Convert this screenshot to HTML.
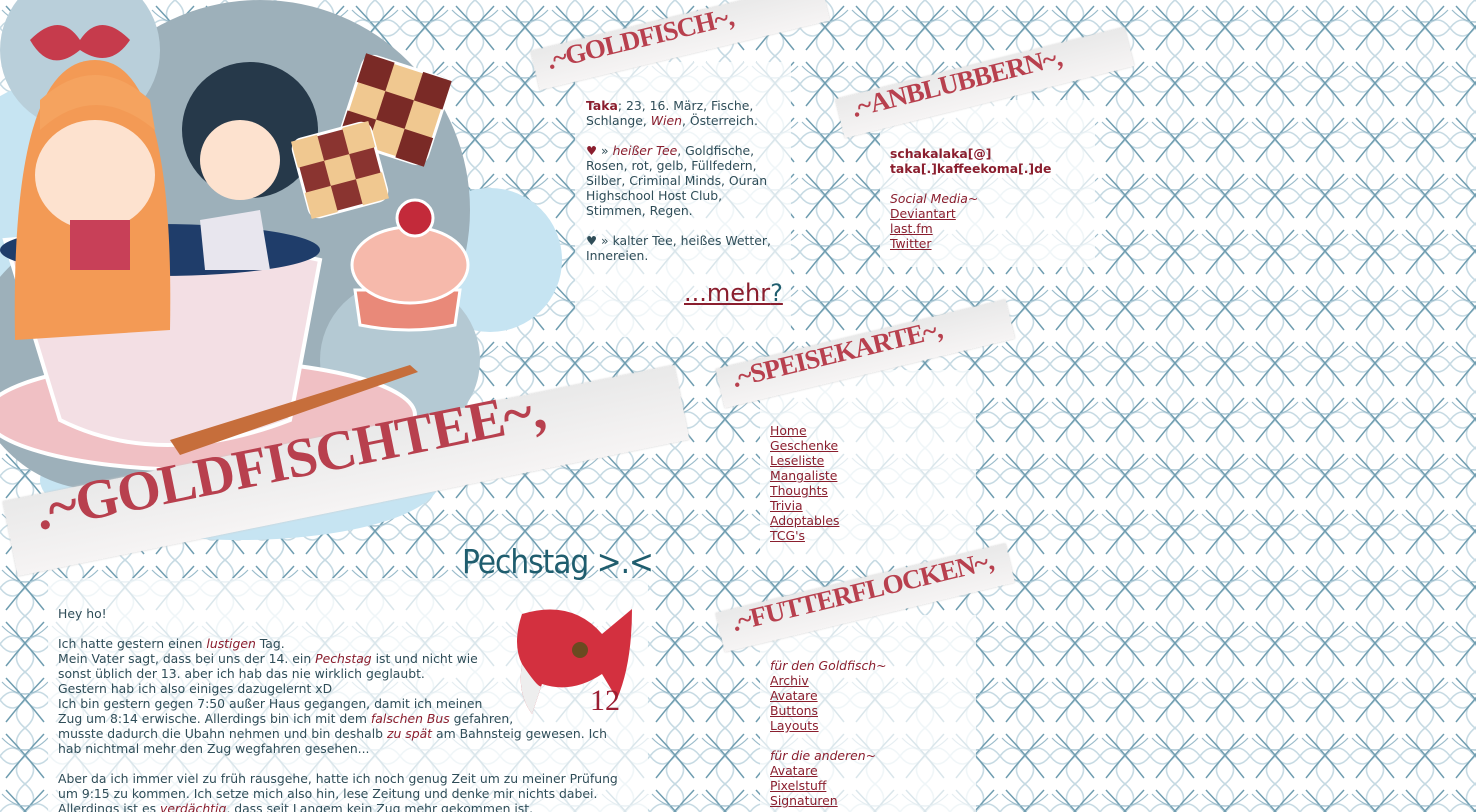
<!DOCTYPE html>
<html><head><meta charset="utf-8"><style>
html,body{margin:0;padding:0;width:1476px;height:812px;overflow:hidden}
body{position:relative;font-family:"DejaVu Sans","Liberation Sans",sans-serif;font-size:12.4px;line-height:15px;color:#2f4d58;background:#fff}
#bg{position:absolute;left:0;top:0}
.box{position:absolute;background:rgba(255,255,255,0.74)}
.t{position:absolute}
a{color:#8a1e2e;text-decoration:underline}
.r{color:#8a1e2e}
b.r{font-weight:bold}
i.r{font-style:italic}
.ban{position:absolute;height:40px;background:linear-gradient(#e9e9e9,#f6f4f4);transform-origin:left bottom;box-shadow:0 0 2px #ccc}
.ban span{position:absolute;font-family:"Liberation Serif",serif;font-weight:bold;color:#b8404e;white-space:nowrap;letter-spacing:-1px}
</style></head><body>
<svg id="bg" width="1476" height="812">
<defs><pattern id="p" width="50" height="56" patternUnits="userSpaceOnUse">
<rect width="50" height="56" fill="#fff"/>
<g fill="none" stroke="#c6dae3" stroke-width="1.6">
<path d="M25 0 Q8 14 25 28 Q42 14 25 0M25 56 Q8 42 25 28 Q42 42 25 56"/>
<path d="M0 28 Q12 12 25 28 Q38 44 50 28M0 28 Q12 44 25 28 Q38 12 50 28"/>
</g>
<g fill="none" stroke="#6f9db0" stroke-width="1.5">
<path d="M6 6 Q25 26 44 50M44 6 Q25 26 6 50"/>
<path d="M2 10 Q25 34 48 10" stroke="#9bbccb" stroke-width="1.2"/>
</g></pattern></defs>
<rect width="1476" height="812" fill="url(#p)"/>
<!-- illustration -->
<circle cx="60" cy="200" r="120" fill="#c6e4f2"/>
<circle cx="490" cy="260" r="72" fill="#c6e4f2"/>
<ellipse cx="240" cy="480" rx="200" ry="60" fill="#c6e4f2"/>
<circle cx="260" cy="210" r="210" fill="#9db0ba"/>
<circle cx="100" cy="360" r="130" fill="#9db0ba"/>
<circle cx="400" cy="360" r="80" fill="#b4c9d3"/>
<circle cx="80" cy="50" r="80" fill="#b9cfda"/>
<ellipse cx="200" cy="415" rx="215" ry="55" fill="#f0c0c4" stroke="#fff" stroke-width="4"/>
<path d="M5 240 Q160 225 320 260 L290 420 Q160 470 60 420 Z" fill="#f3dfe4" stroke="#fff" stroke-width="4"/>
<ellipse cx="160" cy="250" rx="160" ry="26" fill="#1f3d6a"/>
<path d="M15 340 Q10 60 95 60 Q175 60 170 330 Z" fill="#f39a55"/>
<ellipse cx="95" cy="175" rx="60" ry="55" fill="#fde2cf"/>
<path d="M40 130 Q95 80 155 130 L150 100 Q95 50 40 100Z" fill="#f5a35f"/>
<path d="M30 40 Q60 10 80 40 Q100 10 130 40 Q110 70 80 50 Q50 75 30 40Z" fill="#c63b4c"/>
<rect x="70" y="220" width="60" height="50" fill="#c84058"/>
<circle cx="250" cy="130" r="68" fill="#26394a"/>
<ellipse cx="240" cy="160" rx="40" ry="40" fill="#fde2cf"/>
<path d="M200 220 L260 210 L270 270 L205 270Z" fill="#e8e6ee"/>
<g transform="rotate(18 395 110)"><rect x="350" y="65" width="90" height="90" rx="12" fill="#f0c890" stroke="#fff" stroke-width="3"/>
<rect x="350" y="65" width="30" height="30" fill="#7a2a26"/><rect x="410" y="65" width="30" height="30" fill="#7a2a26"/><rect x="380" y="95" width="30" height="30" fill="#7a2a26"/><rect x="350" y="125" width="30" height="30" fill="#7a2a26"/><rect x="410" y="125" width="30" height="30" fill="#7a2a26"/></g>
<g transform="rotate(-15 340 170)"><rect x="300" y="130" width="80" height="80" rx="10" fill="#8a3430" stroke="#fff" stroke-width="3"/>
<rect x="300" y="130" width="27" height="27" fill="#f0c890"/><rect x="353" y="130" width="27" height="27" fill="#f0c890"/><rect x="327" y="157" width="26" height="26" fill="#f0c890"/><rect x="300" y="183" width="27" height="27" fill="#f0c890"/><rect x="353" y="183" width="27" height="27" fill="#f0c890"/></g>
<path d="M355 290 L460 290 L455 325 Q410 335 360 325Z" fill="#e98979" stroke="#fff" stroke-width="3"/>
<ellipse cx="410" cy="265" rx="58" ry="38" fill="#f6b9ab" stroke="#fff" stroke-width="3"/>
<circle cx="415" cy="218" r="18" fill="#c32a3a" stroke="#fff" stroke-width="3"/>
<path d="M170 440 L410 365 L418 372 L180 455Z" fill="#c66e3b"/>
</svg>

<!-- big banner -->
<div class="ban" style="left:18px;top:500px;width:685px;height:76px;transform:rotate(-11.5deg)"><span style="left:30px;top:10px;font-size:56px">.~GOLDFISCHTEE~,</span></div>

<!-- main content -->
<div class="box" style="left:48px;top:578px;width:600px;height:240px"></div>
<div class="t" style="left:462px;top:540px;font-family:'DejaVu Sans Condensed','DejaVu Sans',sans-serif;font-size:33px;line-height:44px;color:#1f5d6e;letter-spacing:-1px">Pechstag &gt;.&lt;</div>
<svg class="t" style="left:512px;top:604px" width="126" height="112"><path d="M10 10 Q60 -5 90 30 L120 5 Q120 60 105 95 L90 70 Q60 90 30 80 L20 110 Q5 90 10 60 Q0 40 10 10Z" fill="#d3303f"/><path d="M10 60 Q30 90 30 80 L20 110 Q5 90 10 60Z" fill="#eee"/><circle cx="68" cy="46" r="8" fill="#6a4a20"/><text x="78" y="106" font-family="Liberation Serif" font-size="30" fill="#9b1e33">12</text></svg>
<div class="t" style="left:58px;top:606px;width:590px;white-space:nowrap">
Hey ho!<br><br>
Ich hatte gestern einen <i class="r">lustigen</i> Tag.<br>
Mein Vater sagt, dass bei uns der 14. ein <i class="r">Pechstag</i> ist und nicht wie<br>
sonst üblich der 13. aber ich hab das nie wirklich geglaubt.<br>
Gestern hab ich also einiges dazugelernt xD<br>
Ich bin gestern gegen 7:50 außer Haus gegangen, damit ich meinen<br>
Zug um 8:14 erwische. Allerdings bin ich mit dem <i class="r">falschen Bus</i> gefahren,<br>
musste dadurch die Ubahn nehmen und bin deshalb <i class="r">zu spät</i> am Bahnsteig gewesen. Ich<br>
hab nichtmal mehr den Zug wegfahren gesehen...<br><br>
Aber da ich immer viel zu früh rausgehe, hatte ich noch genug Zeit um zu meiner Prüfung<br>
um 9:15 zu kommen. Ich setze mich also hin, lese Zeitung und denke mir nichts dabei.<br>
Allerdings ist es <i class="r">verdächtig</i>, dass seit Langem kein Zug mehr gekommen ist.
</div>

<!-- goldfisch -->
<div class="box" style="left:575px;top:62px;width:216px;height:275px"></div>
<div class="ban" style="left:540px;top:50px;width:298px;transform:rotate(-13.5deg)"><span style="left:14px;top:6px;font-size:27px">.~GOLDFISCH~,</span></div>
<div class="t" style="left:586px;top:98px;width:200px;white-space:nowrap">
<b class="r">Taka</b>; 23, 16. März, Fische,<br>Schlange, <i class="r">Wien</i>, Österreich.<br><br>
<span class="r">♥</span> » <i class="r">heißer Tee</i>, Goldfische,<br>Rosen, rot, gelb, Füllfedern,<br>Silber, Criminal Minds, Ouran<br>Highschool Host Club,<br>Stimmen, Regen.<br><br>
♥ » kalter Tee, heißes Wetter,<br>Innereien.</div>
<div class="t" style="left:684px;top:278px;font-family:'DejaVu Sans',sans-serif;font-size:24px;line-height:30px;color:#8a1e2e;text-decoration:underline">...mehr<span style="color:#1f5d6e;text-decoration:none">?</span></div>

<!-- anblubbern -->
<div class="box" style="left:880px;top:100px;width:215px;height:167px"></div>
<div class="ban" style="left:845px;top:98px;width:298px;transform:rotate(-14deg)"><span style="left:14px;top:6px;font-size:27px">.~ANBLUBBERN~,</span></div>
<div class="t" style="left:890px;top:146px;white-space:nowrap"><b class="r">schakalaka[@]<br>taka[.]kaffeekoma[.]de</b><br><br><i class="r">Social Media~</i><br><a>Deviantart</a><br><a>last.fm</a><br><a>Twitter</a></div>

<!-- speisekarte -->
<div class="box" style="left:760px;top:370px;width:216px;height:190px"></div>
<div class="ban" style="left:725px;top:368px;width:298px;transform:rotate(-13.5deg)"><span style="left:14px;top:6px;font-size:27px">.~SPEISEKARTE~,</span></div>
<div class="t" style="left:770px;top:423px"><a>Home</a><br><a>Geschenke</a><br><a>Leseliste</a><br><a>Mangaliste</a><br><a>Thoughts</a><br><a>Trivia</a><br><a>Adoptables</a><br><a>TCG's</a></div>

<!-- futterflocken -->
<div class="box" style="left:760px;top:615px;width:216px;height:200px"></div>
<div class="ban" style="left:725px;top:612px;width:298px;transform:rotate(-13.5deg)"><span style="left:14px;top:6px;font-size:27px">.~FUTTERFLOCKEN~,</span></div>
<div class="t" style="left:770px;top:658px;white-space:nowrap"><i class="r">für den Goldfisch~</i><br><a>Archiv</a><br><a>Avatare</a><br><a>Buttons</a><br><a>Layouts</a><br><br><i class="r">für die anderen~</i><br><a>Avatare</a><br><a>Pixelstuff</a><br><a>Signaturen</a></div>
</body></html>
